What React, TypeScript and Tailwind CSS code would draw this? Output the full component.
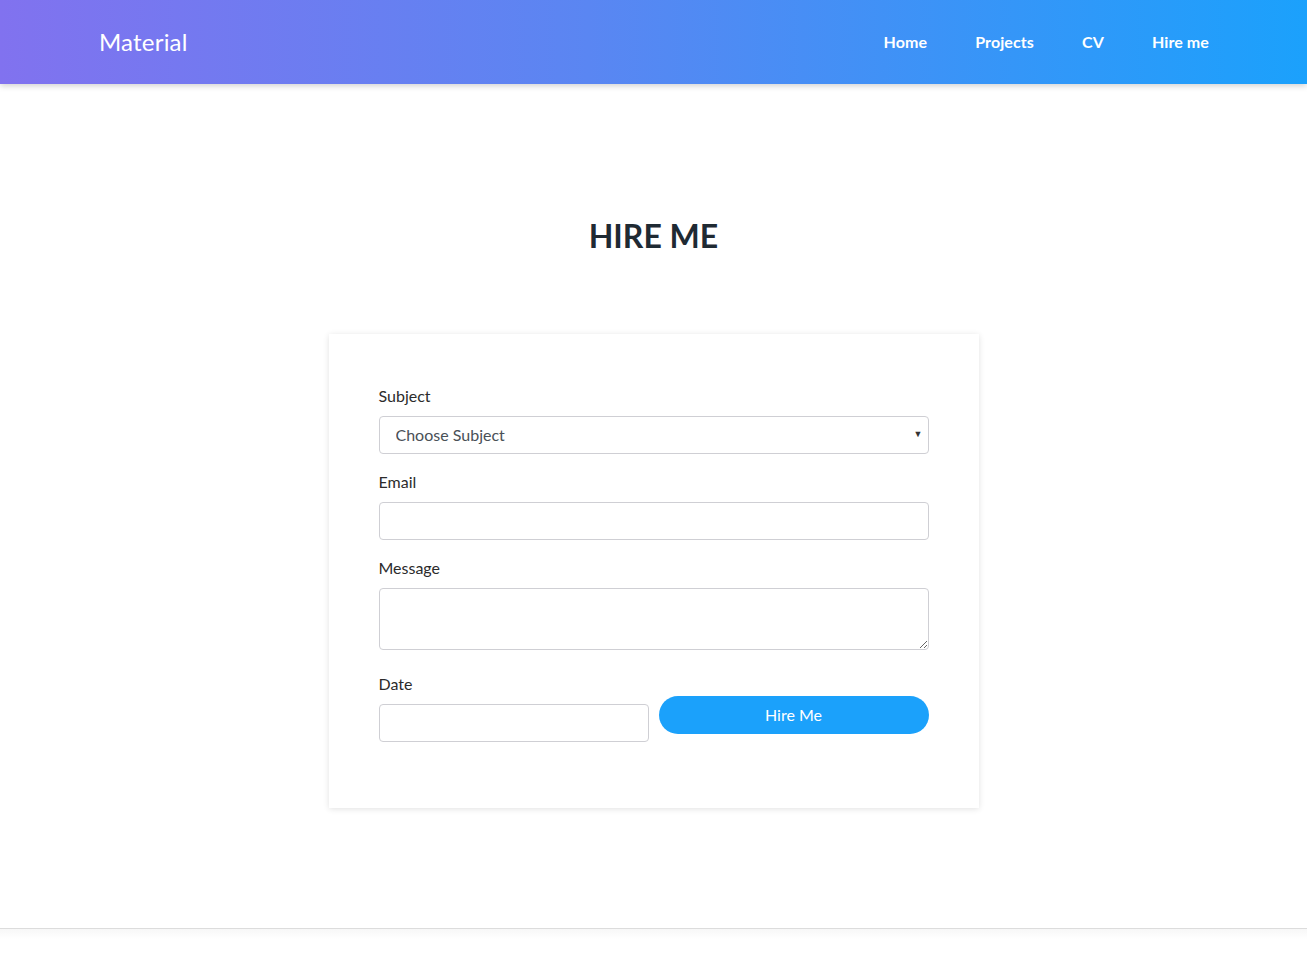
import React from 'react';

const NAV_LINKS = ['Home', 'Projects', 'CV', 'Hire me'];

function Navbar() {
  return (
    <header className="h-[84px] bg-[linear-gradient(to_right,#8172ef,#5a86f2_45%,#1ba1fc)] shadow-[0_2px_6px_rgba(0,0,0,0.18)] relative z-10">
      <div className="h-full flex items-center justify-between pl-[99px] pr-[98px]">
        <a className="text-white text-[24px] leading-none tracking-[0.2px]">Material</a>
        <nav className="flex items-center gap-[48px]">
          {NAV_LINKS.map((l) => (
            <a key={l} className="text-white text-[16px] font-bold leading-none tracking-[0.1px]">
              {l}
            </a>
          ))}
        </nav>
      </div>
    </header>
  );
}

function Label({ children }: { children: React.ReactNode }) {
  return <label className="block text-[16px] leading-[20px] text-[#2b2b2b] mb-[10px]">{children}</label>;
}

const fieldCls =
  'block w-full h-[38px] rounded-[4px] border border-[#cfcfd4] bg-white px-4 text-[16px] text-[#495057] outline-none';

export default function App() {
  return (
    <div className="min-h-screen bg-white font-['Lato','Liberation_Sans',sans-serif]">
      <Navbar />
      <main className="flex flex-col items-center">
        <h1 className="mt-[130px] text-[32px] leading-[43px] font-bold text-[#1f2a33]">HIRE ME</h1>
        <form className="mt-[77px] w-[650px] bg-white shadow-[0_1px_6px_rgba(0,0,0,0.12)] px-[50px] pt-[52px] pb-[66px]">
          <Label>Subject</Label>
          <div className="relative">
            <select defaultValue="" className={fieldCls + ' appearance-none'}>
              <option value="">Choose Subject</option>
              <option>Web Design</option>
              <option>Development</option>
            </select>
            <span className="absolute right-[6px] top-[11px] text-[9px] text-[#333] pointer-events-none">▼</span>
          </div>

          <div className="mt-[18px]">
            <Label>Email</Label>
            <input type="email" className={fieldCls} />
          </div>

          <div className="mt-[18px]">
            <Label>Message</Label>
            <textarea className="block w-full h-[62px] rounded-[4px] border border-[#cfcfd4] bg-white px-4 py-2 text-[16px] outline-none" />
          </div>

          <div className="mt-[24px] grid grid-cols-2 gap-[10px]">
            <div>
              <Label>Date</Label>
              <input type="text" className={fieldCls} />
            </div>
            <div className="pt-[22px]">
              <button
                type="button"
                className="w-full h-[38px] rounded-full bg-[#1ba1fb] text-white text-[16px]"
              >
                Hire Me
              </button>
            </div>
          </div>
        </form>
      </main>
      <footer className="mt-[120px] border-t border-[#dcdcdc] h-[36px] bg-[linear-gradient(to_bottom,#f7f7f7,#ffffff_10px)]" />
    </div>
  );
}
